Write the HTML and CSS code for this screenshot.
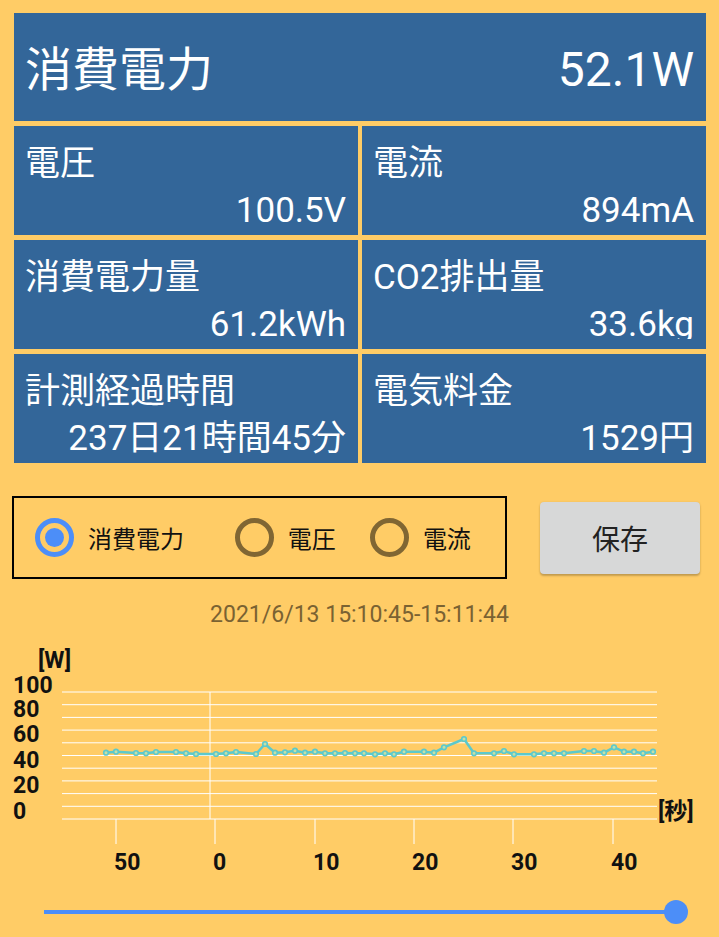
FILE: index.html
```html
<!DOCTYPE html>
<html lang="ja">
<head>
    <meta charset="UTF-8">
    <title>電力モニター</title>
    <link rel="stylesheet" href="styles.css">
</head>
<body>
    <div class="hero">
        <span class="hero-label">消費電力</span>
        <span class="hero-value">52.1W</span>
    </div>

    <div class="stats">
        <div class="stat"><div class="stat-label">電圧</div><div class="stat-value">100.5V</div></div>
        <div class="stat"><div class="stat-label">電流</div><div class="stat-value">894mA</div></div>
        <div class="stat"><div class="stat-label">消費電力量</div><div class="stat-value">61.2kWh</div></div>
        <div class="stat"><div class="stat-label">CO2排出量</div><div class="stat-value clipped">33.6kg</div></div>
        <div class="stat"><div class="stat-label">計測経過時間</div><div class="stat-value">237日21時間45分</div></div>
        <div class="stat"><div class="stat-label">電気料金</div><div class="stat-value">1529円</div></div>
    </div>

    <div class="controls">
        <div class="radio-group">
            <label class="radio radio-wide checked"><span class="radio-mark"></span><span class="radio-text">消費電力</span></label>
            <label class="radio"><span class="radio-mark"></span><span class="radio-text">電圧</span></label>
            <label class="radio"><span class="radio-mark"></span><span class="radio-text">電流</span></label>
        </div>
        <button class="save-button">保存</button>
    </div>

    <div class="period">2021/6/13 15:10:45-15:11:44</div>

    <svg class="chart" width="719" height="250" viewBox="0 0 719 250">
        <text class="axis-label" x="38" y="28">[W]</text>
        <text class="axis-label" x="13" y="53">100</text>
        <text class="axis-label" x="13" y="77">80</text>
        <text class="axis-label" x="13" y="102">60</text>
        <text class="axis-label" x="13" y="128">40</text>
        <text class="axis-label" x="13" y="153">20</text>
        <text class="axis-label" x="13" y="179">0</text>
        <g id="grid" class="grid"></g>
        <line class="grid-line" x1="210" y1="52" x2="210" y2="179"></line>
        <g id="ticks" class="grid"></g>
        <polyline id="series" class="series" points=""></polyline>
        <g id="dots"></g>
        <text class="axis-label" x="658" y="179">[秒]</text>
        <text class="axis-label" x="114" y="230">50</text>
        <text class="axis-label" x="213" y="230">0</text>
        <text class="axis-label" x="313" y="230">10</text>
        <text class="axis-label" x="412" y="230">20</text>
        <text class="axis-label" x="511" y="230">30</text>
        <text class="axis-label" x="611" y="230">40</text>
    </svg>

    <div class="slider">
        <div class="slider-track"></div>
        <div class="slider-thumb"></div>
    </div>

    <script>
        var NS = 'http://www.w3.org/2000/svg';

        // horizontal grid, 11 lines
        var grid = document.getElementById('grid');
        for (var i = 0; i <= 10; i++) {
            var y = 52 + i * 12.7;
            var l = document.createElementNS(NS, 'line');
            l.setAttribute('class', 'grid-line');
            l.setAttribute('x1', 62); l.setAttribute('x2', 657);
            l.setAttribute('y1', y); l.setAttribute('y2', y);
            grid.appendChild(l);
        }

        // ticks under the axis
        var ticks = document.getElementById('ticks');
        [116, 215, 315, 414, 513, 613].forEach(function(x) {
            var t = document.createElementNS(NS, 'line');
            t.setAttribute('class', 'grid-line');
            t.setAttribute('x1', x); t.setAttribute('x2', x);
            t.setAttribute('y1', 179); t.setAttribute('y2', 204);
            ticks.appendChild(t);
        });

        var data = [
            [106,112.7],[116,111.7],[136,113],[146,113.3],[156,112],[176,112],[186,113.3],[196,114],
            [216,114],[226,113.3],[236,112],[256,114],[265,104],[275,112.7],[285,112.3],[295,110.7],
            [305,112.7],[315,111.7],[325,113.3],[335,113.3],[345,113],[355,113.3],[364,113.3],[375,114.3],
            [385,113.3],[394,114.3],[404,111.7],[424,111.7],[434,112.7],[444,107.3],[464,99],[474,113.3],
            [494,113.3],[504,111],[514,114.3],[534,114.3],[544,113.3],[554,113.3],[564,113.3],[584,111],
            [594,111],[604,112.7],[614,107.3],[624,111.7],[634,111.7],[643,113.3],[653,111.7]
        ];

        document.getElementById('series').setAttribute('points', data.map(function(p) { return p.join(','); }).join(' '));

        var dots = document.getElementById('dots');
        data.forEach(function(p) {
            var c = document.createElementNS(NS, 'circle');
            c.setAttribute('class', 'dot');
            c.setAttribute('cx', p[0]);
            c.setAttribute('cy', p[1]);
            c.setAttribute('r', 2.3);
            dots.appendChild(c);
        });
    </script>
</body>
</html>
```

FILE: styles.css
```css
body { margin: 0; padding: 13px 13px 0 14px; background: #ffcc66; font-family: Roboto, "Noto Sans CJK JP", sans-serif; }

.hero { height: 108px; box-sizing: border-box; padding: 27px 12px 0 11px; margin-bottom: 5px; background: #336699; color: #fff; display: flex; justify-content: space-between; align-items: baseline; }
.hero-label { font-size: 47px; line-height: 60px; }
.hero-value { font-size: 48px; line-height: 60px; }

.stats { display: grid; grid-template-columns: 1fr 1fr; grid-auto-rows: 109px; column-gap: 4px; row-gap: 5px; }
.stat { background: #336699; color: #fff; padding: 18px 12px 0 11px; box-sizing: border-box; }
.stat-label { font-size: 35px; line-height: 40px; white-space: nowrap; }
.stat-value { font-size: 35px; line-height: 40px; margin-top: 7px; text-align: right; white-space: nowrap; }
/* the kg value is cut at the baseline on the device */
.stat-value.clipped { height: 34px; overflow: hidden; }

.controls { display: flex; align-items: center; margin: 33px 0 0 -2px; }
.radio-group { width: 495px; height: 83px; box-sizing: border-box; border: 2px solid #000; padding-left: 21px; display: flex; align-items: center; }
.radio { display: flex; align-items: center; width: 138px; }
.radio-wide { width: 204px; }
.radio-mark { width: 39px; height: 39px; box-sizing: border-box; border: 5px solid #806633; border-radius: 50%; display: flex; align-items: center; justify-content: center; flex: none; }
.radio.checked .radio-mark { border-color: #4c8ef8; }
.radio.checked .radio-mark::after { content: ""; width: 19px; height: 19px; border-radius: 50%; background: #4c8ef8; }
.radio-text { font-size: 24px; color: #111; margin-left: 14px; white-space: nowrap; }

.save-button { margin-left: 33px; width: 160px; height: 72px; border: none; border-radius: 4px; background: #d7d8d8; color: #222; font-family: inherit; font-size: 28px; box-shadow: 0 2px 2px rgba(0,0,0,0.22), 0 0 2px rgba(0,0,0,0.1); }

.period { margin: 23px 0 0 -14px; width: 719px; text-align: center; font-size: 23px; line-height: 26px; color: #7a6232; }

.chart { display: block; margin: 12px 0 0 -14px; }
.axis-label { font-family: Roboto, "Noto Sans CJK JP", sans-serif; font-weight: bold; font-size: 23px; fill: #111; }
.grid-line { stroke: #fff; stroke-width: 1; }
.series { fill: none; stroke: #5cc9cc; stroke-width: 2.5; stroke-linejoin: round; }
.dot { fill: #c4e0a8; stroke: #5cc9cc; stroke-width: 1.6; }

.slider { display: flex; align-items: center; margin: 10px 0 0 30px; height: 24px; }
.slider-track { width: 632px; height: 4px; background: #4c8ef8; }
.slider-thumb { width: 24px; height: 24px; border-radius: 50%; background: #4c8ef8; margin-left: -12px; }
```
